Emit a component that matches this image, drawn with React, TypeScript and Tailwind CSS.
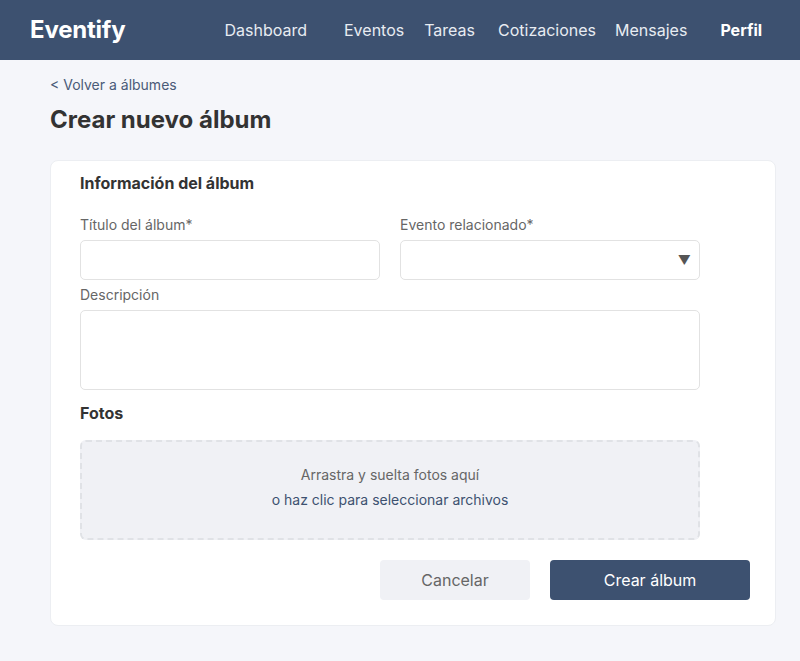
import React from "react";

export default function App() {
  return (
    <div className="min-h-[661px] bg-[#f5f6fa] text-[#333]" style={{ fontFamily: "Inter, 'Noto Sans', sans-serif" }}>
      <header className="h-[60px] bg-[#3d5170] flex items-center pl-[30px] text-white">
        <div className="text-[24px] font-bold leading-none tracking-[-0.2px]">Eventify</div>
        <nav className="flex items-center text-[16px] text-[#e8ecf2]">
          <a className="ml-[99px]">Dashboard</a>
          <a className="ml-[37px]">Eventos</a>
          <a className="ml-[20px]">Tareas</a>
          <a className="ml-[23px]">Cotizaciones</a>
          <a className="ml-[19px]">Mensajes</a>
          <a className="ml-[33px] font-bold text-white">Perfil</a>
        </nav>
      </header>
      <main className="px-[50px] pt-[15px] pb-[35px]">
        <a className="block text-[14px] leading-[20px] text-[#4a5b78]">&lt; Volver a álbumes</a>
        <h1 className="mt-[9px] text-[24px] leading-[32px] font-bold text-[#333]">Crear nuevo álbum</h1>
        <div className="mt-[24px] w-[726px] bg-white rounded-[8px] border border-[#eceef2] pl-[29px] pr-[25px] pt-[12px] pb-[25px]">
          <h2 className="text-[16px] leading-[20px] font-bold text-[#333]">Información del álbum</h2>
          <div className="w-[620px]">
            <div className="mt-[22px] grid grid-cols-2 gap-x-[20px]">
              <div>
                <label className="block text-[14px] leading-[20px] text-[#666]">Título del álbum*</label>
                <div className="mt-[5px] h-[40px] rounded-[5px] border border-[#e2e2e2] bg-white"></div>
              </div>
              <div>
                <label className="block text-[14px] leading-[20px] text-[#666]">Evento relacionado*</label>
                <div className="mt-[5px] h-[40px] rounded-[5px] border border-[#e2e2e2] bg-white flex items-center justify-end pr-[8px]">
                  <span className="text-[13px] text-[#555] leading-none">▼</span>
                </div>
              </div>
            </div>
            <label className="block mt-[5px] text-[14px] leading-[20px] text-[#666]">Descripción</label>
            <div className="mt-[5px] h-[80px] rounded-[5px] border border-[#e2e2e2] bg-white"></div>
            <h2 className="mt-[13px] text-[16px] leading-[20px] font-bold text-[#333]">Fotos</h2>
            <div className="mt-[17px] h-[100px] rounded-[6px] border-2 border-dashed border-[#e0e2e6] bg-[#f0f1f5] flex flex-col items-center justify-center pb-[6px] text-[14px]">
              <div className="leading-[20px] text-[#666]">Arrastra y suelta fotos aquí</div>
              <div className="mt-[5px] leading-[20px] text-[#3d5170]">o haz clic para seleccionar archivos</div>
            </div>
          </div>
          <div className="mt-[20px] flex justify-end gap-[20px]">
            <button className="w-[150px] h-[40px] rounded-[4px] bg-[#f0f1f5] text-[16px] text-[#666]">Cancelar</button>
            <button className="w-[200px] h-[40px] rounded-[4px] bg-[#3d5170] text-[16px] text-white">Crear álbum</button>
          </div>
        </div>
      </main>
    </div>
  );
}
